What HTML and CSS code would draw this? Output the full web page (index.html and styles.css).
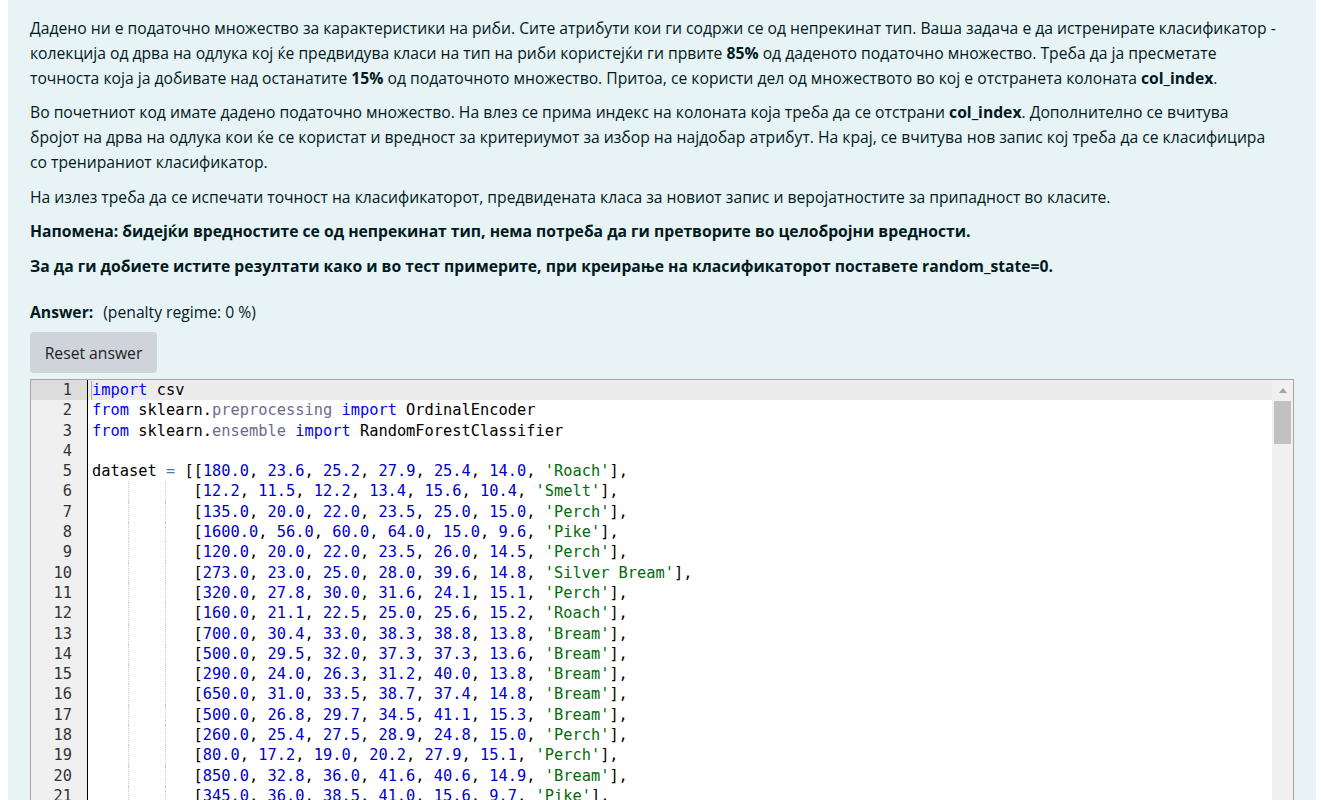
FILE: index.html
```html
<!DOCTYPE html>
<html lang="mk">
<head>
<meta charset="utf-8">
<title>Question</title>
<link rel="stylesheet" href="styles.css">
</head>
<body>
<div class="formulation">
  <div class="qtext">
    <p>Дадено ни е податочно множество за карактеристики на риби. Сите атрибути кои ги содржи се од непрекинат тип. Ваша задача е да истренирате класификатор -<br>колекција од дрва на одлука кој ќе предвидува класи на тип на риби користејќи ги првите <b>85%</b> од даденото податочно множество. Треба да ја пресметате<br>точноста која ја добивате над останатите <b>15%</b> од податочното множество. Притоа, се користи дел од множеството во кој е отстранета колоната <b>col_index</b>.</p>
    <p>Во почетниот код имате дадено податочно множество. На влез се прима индекс на колоната која треба да се отстрани <b>col_index</b>. Дополнително се вчитува<br>бројот на дрва на одлука кои ќе се користат и вредност за критериумот за избор на најдобар атрибут. На крај, се вчитува нов запис кој треба да се класифицира<br>со тренираниот класификатор.</p>
    <p>На излез треба да се испечати точност на класификаторот, предвидената класа за новиот запис и веројатностите за припадност во класите.</p>
    <p><b>Напомена: бидејќи вредностите се од непрекинат тип, нема потреба да ги претворите во целобројни вредности.</b></p>
    <p><b>За да ги добиете истите резултати како и во тест примерите, при креирање на класификаторот поставете random_state=0.</b></p>
  </div>
  <div class="answer-label"><b>Answer:</b><span class="penalty">(penalty regime: 0 %)</span></div>
  <button class="btn-reset" type="button">Reset answer</button>
  <div class="editor">
    <div class="gutter">
      <div class="gl active">1</div><div class="gl">2</div><div class="gl">3</div><div class="gl">4</div><div class="gl">5</div><div class="gl">6</div><div class="gl">7</div><div class="gl">8</div><div class="gl">9</div><div class="gl">10</div><div class="gl">11</div><div class="gl">12</div><div class="gl">13</div><div class="gl">14</div><div class="gl">15</div><div class="gl">16</div><div class="gl">17</div><div class="gl">18</div><div class="gl">19</div><div class="gl">20</div><div class="gl">21</div><div class="gl">22</div>
    </div>
    <div class="code">
<div class="cl active"><span class="cursor"></span><span class="k">import</span> csv</div>
<div class="cl"><span class="k">from</span> sklearn.<span class="m">preprocessing</span> <span class="k">import</span> OrdinalEncoder</div>
<div class="cl"><span class="k">from</span> sklearn.<span class="m">ensemble</span> <span class="k">import</span> RandomForestClassifier</div>
<div class="cl"> </div>
<div class="cl">dataset <span class="op">=</span> [[<span class="n">180.0</span>, <span class="n">23.6</span>, <span class="n">25.2</span>, <span class="n">27.9</span>, <span class="n">25.4</span>, <span class="n">14.0</span>, <span class="s">'Roach'</span>],</div>
<div class="cl"><span class="ig"></span><span class="ig"></span>   [<span class="n">12.2</span>, <span class="n">11.5</span>, <span class="n">12.2</span>, <span class="n">13.4</span>, <span class="n">15.6</span>, <span class="n">10.4</span>, <span class="s">'Smelt'</span>],</div>
<div class="cl"><span class="ig"></span><span class="ig"></span>   [<span class="n">135.0</span>, <span class="n">20.0</span>, <span class="n">22.0</span>, <span class="n">23.5</span>, <span class="n">25.0</span>, <span class="n">15.0</span>, <span class="s">'Perch'</span>],</div>
<div class="cl"><span class="ig"></span><span class="ig"></span>   [<span class="n">1600.0</span>, <span class="n">56.0</span>, <span class="n">60.0</span>, <span class="n">64.0</span>, <span class="n">15.0</span>, <span class="n">9.6</span>, <span class="s">'Pike'</span>],</div>
<div class="cl"><span class="ig"></span><span class="ig"></span>   [<span class="n">120.0</span>, <span class="n">20.0</span>, <span class="n">22.0</span>, <span class="n">23.5</span>, <span class="n">26.0</span>, <span class="n">14.5</span>, <span class="s">'Perch'</span>],</div>
<div class="cl"><span class="ig"></span><span class="ig"></span>   [<span class="n">273.0</span>, <span class="n">23.0</span>, <span class="n">25.0</span>, <span class="n">28.0</span>, <span class="n">39.6</span>, <span class="n">14.8</span>, <span class="s">'Silver Bream'</span>],</div>
<div class="cl"><span class="ig"></span><span class="ig"></span>   [<span class="n">320.0</span>, <span class="n">27.8</span>, <span class="n">30.0</span>, <span class="n">31.6</span>, <span class="n">24.1</span>, <span class="n">15.1</span>, <span class="s">'Perch'</span>],</div>
<div class="cl"><span class="ig"></span><span class="ig"></span>   [<span class="n">160.0</span>, <span class="n">21.1</span>, <span class="n">22.5</span>, <span class="n">25.0</span>, <span class="n">25.6</span>, <span class="n">15.2</span>, <span class="s">'Roach'</span>],</div>
<div class="cl"><span class="ig"></span><span class="ig"></span>   [<span class="n">700.0</span>, <span class="n">30.4</span>, <span class="n">33.0</span>, <span class="n">38.3</span>, <span class="n">38.8</span>, <span class="n">13.8</span>, <span class="s">'Bream'</span>],</div>
<div class="cl"><span class="ig"></span><span class="ig"></span>   [<span class="n">500.0</span>, <span class="n">29.5</span>, <span class="n">32.0</span>, <span class="n">37.3</span>, <span class="n">37.3</span>, <span class="n">13.6</span>, <span class="s">'Bream'</span>],</div>
<div class="cl"><span class="ig"></span><span class="ig"></span>   [<span class="n">290.0</span>, <span class="n">24.0</span>, <span class="n">26.3</span>, <span class="n">31.2</span>, <span class="n">40.0</span>, <span class="n">13.8</span>, <span class="s">'Bream'</span>],</div>
<div class="cl"><span class="ig"></span><span class="ig"></span>   [<span class="n">650.0</span>, <span class="n">31.0</span>, <span class="n">33.5</span>, <span class="n">38.7</span>, <span class="n">37.4</span>, <span class="n">14.8</span>, <span class="s">'Bream'</span>],</div>
<div class="cl"><span class="ig"></span><span class="ig"></span>   [<span class="n">500.0</span>, <span class="n">26.8</span>, <span class="n">29.7</span>, <span class="n">34.5</span>, <span class="n">41.1</span>, <span class="n">15.3</span>, <span class="s">'Bream'</span>],</div>
<div class="cl"><span class="ig"></span><span class="ig"></span>   [<span class="n">260.0</span>, <span class="n">25.4</span>, <span class="n">27.5</span>, <span class="n">28.9</span>, <span class="n">24.8</span>, <span class="n">15.0</span>, <span class="s">'Perch'</span>],</div>
<div class="cl"><span class="ig"></span><span class="ig"></span>   [<span class="n">80.0</span>, <span class="n">17.2</span>, <span class="n">19.0</span>, <span class="n">20.2</span>, <span class="n">27.9</span>, <span class="n">15.1</span>, <span class="s">'Perch'</span>],</div>
<div class="cl"><span class="ig"></span><span class="ig"></span>   [<span class="n">850.0</span>, <span class="n">32.8</span>, <span class="n">36.0</span>, <span class="n">41.6</span>, <span class="n">40.6</span>, <span class="n">14.9</span>, <span class="s">'Bream'</span>],</div>
<div class="cl"><span class="ig"></span><span class="ig"></span>   [<span class="n">345.0</span>, <span class="n">36.0</span>, <span class="n">38.5</span>, <span class="n">41.0</span>, <span class="n">15.6</span>, <span class="n">9.7</span>, <span class="s">'Pike'</span>],</div>
<div class="cl"><span class="ig"></span><span class="ig"></span>   [<span class="n">700.0</span>, <span class="n">30.4</span>, <span class="n">33.0</span>, <span class="n">38.5</span>, <span class="n">38.8</span>, <span class="n">13.5</span>, <span class="s">'Bream'</span>],</div>
    </div>
    <div class="scrollbar">
      <div class="sb-arrow"></div>
      <div class="sb-thumb"></div>
    </div>
  </div>
</div>
</body>
</html>
```

FILE: styles.css
```css
html, body {
  margin: 0;
  padding: 0;
  background: #ffffff;
}

body {
  font-family: "Open Sans", "Noto Sans", sans-serif;
  font-size: 15.7px;
  color: #1d2125;
}

.formulation {
  margin: 0 5px 0 8px;
  padding: 15.5px 22px 40px 22px;
  background: #e7f3f5;
  color: #001a1e;
}

.qtext p {
  margin: 0 0 9.5px 0;
  line-height: 25px;
}

.qtext b {
  font-weight: 700;
}

.answer-label {
  margin-top: 21px;
  line-height: 25px;
}

.answer-label b {
  font-weight: 700;
}

.penalty {
  margin-left: 10px;
}

.btn-reset {
  display: block;
  margin-top: 7.5px;
  height: 41px;
  width: 127px;
  padding: 0;
  border: none;
  border-radius: 4px;
  background: #ced4da;
  color: #1d2125;
  font-family: inherit;
  font-size: 15.7px;
}

.editor {
  margin-top: 6px;
  display: flex;
  height: 460px;
  overflow: hidden;
  border: 1px solid #a6a6a6;
  border-bottom: none;
  background: #ffffff;
  font-family: "DejaVu Sans Mono", "Liberation Mono", monospace;
  font-size: 15.35px;
}

.gutter {
  width: 56px;
  flex: none;
  background: #f0f0f0;
  border-right: 1px solid #000000;
  color: #333333;
}

.gl {
  height: 20.3px;
  line-height: 21.3px;
  text-align: right;
  padding-right: 15px;
}

.gl.active {
  background: #dcdcdc;
}

.code {
  flex: 1;
  padding-left: 4px;
  color: #000000;
}

.cl {
  height: 20.3px;
  line-height: 21.3px;
  white-space: pre;
  position: relative;
}

.cl.active {
  background: #ececec;
  margin-left: -4px;
  padding-left: 4px;
}

.cursor {
  position: absolute;
  left: 3px;
  top: 1px;
  width: 1px;
  height: 19px;
  background: #aaaaaa;
}

.k { color: #0000ff; }
.n { color: #0000cd; }
.s { color: #036a07; }
.op { color: #687687; }
.m { color: #6b6b8e; }

.ig {
  display: inline-block;
  vertical-align: top;
  box-sizing: border-box;
  width: 4ch;
  height: 20.3px;
  border-right: 1px dotted #c8c8c8;
}

.scrollbar {
  width: 21px;
  flex: none;
  background: #f0f0f0;
}

.sb-arrow {
  margin: 8px auto 0;
  width: 0;
  height: 0;
  border-left: 4.5px solid transparent;
  border-right: 4.5px solid transparent;
  border-bottom: 5px solid #a3a3a3;
}

.sb-thumb {
  margin: 8px 2px 0 2px;
  height: 43px;
  background: #c1c1c1;
}
```
